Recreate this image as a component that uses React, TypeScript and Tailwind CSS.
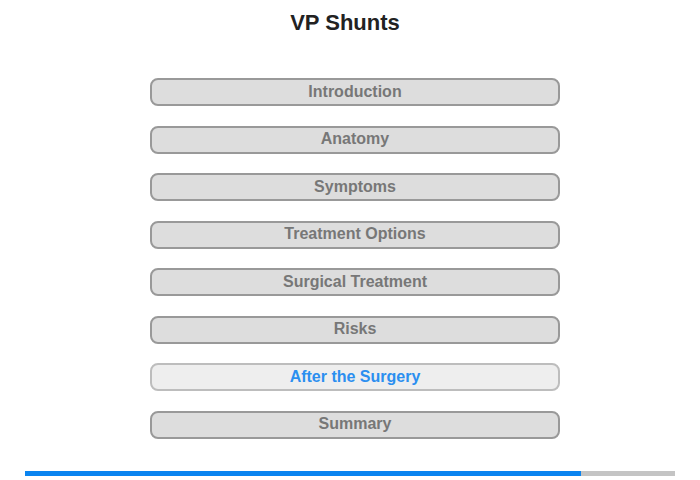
const ITEMS = [
  "Introduction",
  "Anatomy",
  "Symptoms",
  "Treatment Options",
  "Surgical Treatment",
  "Risks",
  "After the Surgery",
  "Summary",
];

const ACTIVE = "After the Surgery";

export default function App() {
  return (
    <div className="w-[700px] h-[480px] bg-white font-['Liberation_Sans',Arial,sans-serif] flex flex-col">
      <h1 className="mt-[10px] h-[26px] leading-[26px] text-[22px] font-bold text-[#222] text-center pr-[10px]">
        VP Shunts
      </h1>

      <nav className="mt-[42px] pl-[150px] flex flex-col gap-[19.5px]">
        {ITEMS.map((item) => {
          const active = item === ACTIVE;
          return (
            <button
              key={item}
              className={
                active
                  ? "w-[410px] h-[28px] rounded-[8px] border-2 border-[#bdbdbd] bg-[#eeeeee] text-[#2b8ff0] text-[16px] font-bold leading-none pb-[1px]"
                  : "w-[410px] h-[28px] rounded-[8px] border-2 border-[#999999] bg-[#dddddd] text-[#777777] text-[16px] font-bold leading-none pb-[1px]"
              }
            >
              {item}
            </button>
          );
        })}
      </nav>

      <div className="mt-auto mb-[4px] mx-[25px] h-[5px] flex bg-[#c4c4c4]">
        <div className="w-[556px] h-full bg-[#0a84f0]" />
      </div>
    </div>
  );
}
